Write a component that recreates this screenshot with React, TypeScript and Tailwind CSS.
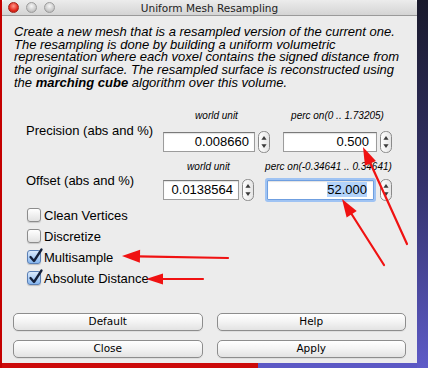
import React from "react";

type Pt = [number, number];

function Arrow({ from, tip, L = 18, W = 6 }: { from: Pt; tip: Pt; L?: number; W?: number }) {
  const dx = tip[0] - from[0];
  const dy = tip[1] - from[1];
  const len = Math.hypot(dx, dy);
  const ux = dx / len;
  const uy = dy / len;
  const bx = tip[0] - ux * L;
  const by = tip[1] - uy * L;
  const px = -uy;
  const py = ux;
  const pts = `${tip[0]},${tip[1]} ${bx + px * W},${by + py * W} ${bx - px * W},${by - py * W}`;
  return (
    <g>
      <line x1={from[0]} y1={from[1]} x2={bx + ux * 2} y2={by + uy * 2} stroke="#f01212" strokeWidth={2.2} strokeLinecap="round" />
      <polygon points={pts} fill="#f01212" />
    </g>
  );
}

function Stepper({ id }: { id: string }) {
  return (
    <svg width="12" height="22" viewBox="0 0 12 22" className="shrink-0 -my-[1px]">
      <defs>
        <linearGradient id={id} x1="0" y1="0" x2="1" y2="0">
          <stop offset="0" stopColor="#ffffff" />
          <stop offset="1" stopColor="#e4e4e4" />
        </linearGradient>
      </defs>
      <rect x="0.5" y="0.5" width="11" height="21" rx="5" fill={`url(#${id})`} stroke="#8a8a8a" />
      <polygon points="6,5 8.6,8.8 3.4,8.8" fill="#3a3a3a" />
      <polygon points="6,17 8.6,13.2 3.4,13.2" fill="#3a3a3a" />
    </svg>
  );
}

function Check({ checked, label }: { checked?: boolean; label: string }) {
  return (
    <div className="flex items-center h-[21px]">
      {checked ? (
        <span className="relative w-[14px] h-[14px] rounded-[3px] border border-[#5a7fb5] bg-gradient-to-b from-[#dbeafc] to-[#86b6ee] shadow-[0_1px_1px_rgba(0,0,0,0.2)]">
          <svg width="16" height="16" viewBox="0 0 16 16" className="absolute left-[0px] top-[-3px] overflow-visible">
            <path d="M2.5 9 L6 13 L13.5 1.5" fill="none" stroke="#14203a" strokeWidth="2.3" strokeLinecap="round" strokeLinejoin="round" />
          </svg>
        </span>
      ) : (
        <span className="w-[14px] h-[14px] rounded-[3px] border border-[#8c8c8c] bg-gradient-to-b from-[#ffffff] to-[#e2e2e2] shadow-[0_1px_1px_rgba(0,0,0,0.15)]" />
      )}
      <span className="ml-[3px] text-[13px] text-black leading-[15px]">{label}</span>
    </div>
  );
}

function Btn({ label }: { label: string }) {
  return (
    <div className="h-[18px] rounded-[5px] border border-[#8d8d8d] bg-gradient-to-b from-[#ffffff] via-[#f3f3f3] to-[#e3e3e3] flex items-center justify-center text-[10.5px] text-black font-['DejaVu_Sans',sans-serif] shadow-[0_1px_0_rgba(0,0,0,0.06)]">
      {label}
    </div>
  );
}

export default function App() {
  return (
    <div className="relative flex w-[428px] h-[368px] overflow-hidden font-['Liberation_Sans',Arial,sans-serif]">
      <div className="w-[2px] h-full bg-[#c40000]" />
      <div className="w-[415px] flex flex-col">
        <div className="h-[363px] flex flex-col bg-[#ececec] rounded-t-[4px]">
          {/* title bar */}
          <div className="h-[16px] shrink-0 grid grid-cols-[1fr_auto_1fr] items-center border-b border-[#9a9a9a] bg-gradient-to-b from-[#ececec] to-[#d4d4d4] rounded-t-[4px]">
            <div className="flex items-center gap-[7px] pl-[6px]">
              <span className="w-[11px] h-[11px] rounded-full border border-[#a3231b] bg-[radial-gradient(circle_at_50%_35%,#ff9a8e,#e3281c_60%,#a9160e)]" />
              <span className="w-[11px] h-[11px] rounded-full border border-[#9c9c9c] bg-[radial-gradient(circle_at_50%_35%,#f6f6f6,#cbcbcb_60%,#a9a9a9)]" />
              <span className="w-[11px] h-[11px] rounded-full border border-[#9c9c9c] bg-[radial-gradient(circle_at_50%_35%,#f6f6f6,#cbcbcb_60%,#a9a9a9)]" />
            </div>
            <div className="text-[10.5px] text-[#222] font-['DejaVu_Sans',sans-serif] leading-[14px]">Uniform Mesh Resampling</div>
            <div />
          </div>

          {/* description */}
          <div className="mt-[10px] pl-[12px] text-[13px] italic leading-[12.7px] text-black whitespace-nowrap">
            Create a new mesh that is a resampled version of the current one.
            <br />
            The resampling is done by building a uniform volumetric
            <br />
            representation where each voxel contains the signed distance from
            <br />
            the original surface. The resampled surface is reconstructed using
            <br />
            the <b>marching cube</b> algorithm over this volume.
          </div>

          {/* precision */}
          <div className="mt-[20px] flex items-center">
            <div className="w-[161px] pl-[24px] text-[13px] text-black leading-[15px]">Precision (abs and %)</div>
            <div className="w-[107px] flex flex-col">
              <div className="text-[10px] italic leading-[12px] text-center whitespace-nowrap">world unit</div>
              <div className="mt-[10px] h-[20px] flex items-center">
                <div className="w-[92px] h-[20px] bg-white border border-[#9c9c9c] border-t-[#7a7a7a] shadow-[inset_0_1px_1px_rgba(0,0,0,0.12)] flex items-center justify-end pr-[5px] text-[13px]">0.008660</div>
                <div className="ml-[3px] flex"><Stepper id="s1" /></div>
              </div>
            </div>
            <div className="ml-[13px] w-[109px] flex flex-col">
              <div className="text-[10px] italic leading-[12px] text-center whitespace-nowrap">perc on(0 .. 1.73205)</div>
              <div className="mt-[10px] h-[20px] flex items-center">
                <div className="w-[94px] h-[20px] bg-white border border-[#9c9c9c] border-t-[#7a7a7a] shadow-[inset_0_1px_1px_rgba(0,0,0,0.12)] flex items-center justify-end pr-[7px] text-[13px]">0.500</div>
                <div className="ml-[3px] flex"><Stepper id="s2" /></div>
              </div>
            </div>
          </div>

          {/* offset */}
          <div className="mt-[9px] flex items-center">
            <div className="w-[161px] pl-[24px] text-[13px] text-black leading-[15px]">Offset (abs and %)</div>
            <div className="w-[91px] flex flex-col">
              <div className="text-[10px] italic leading-[12px] text-center whitespace-nowrap">world unit</div>
              <div className="mt-[7px] h-[20px] flex items-center">
                <div className="w-[76px] h-[20px] bg-white border border-[#9c9c9c] border-t-[#7a7a7a] shadow-[inset_0_1px_1px_rgba(0,0,0,0.12)] flex items-center justify-end pr-[5px] text-[13px]">0.0138564</div>
                <div className="ml-[3px] flex"><Stepper id="s3" /></div>
              </div>
            </div>
            <div className="ml-[11px] w-[127px] flex flex-col">
              <div className="text-[10px] italic leading-[12px] text-center whitespace-nowrap">perc on(-0.34641 .. 0.34641)</div>
              <div className="mt-[7px] h-[20px] flex items-center">
                <div className="ml-[2px] w-[107px] h-[20px] bg-white border border-[#6f9fe0] shadow-[0_0_0_2px_#9fc3f3,inset_0_1px_1px_rgba(0,0,0,0.12)] rounded-[1px] flex items-center justify-end pr-[6px] text-[13px]">
                  <span className="bg-[#b3d3fb] leading-[15px]">52.000</span>
                </div>
                <div className="ml-[6px] flex"><Stepper id="s4" /></div>
              </div>
            </div>
          </div>

          {/* checkboxes */}
          <div className="mt-[5px] pl-[25px] flex flex-col">
            <Check label="Clean Vertices" />
            <Check label="Discretize" />
            <Check checked label="Multisample" />
            <Check checked label="Absolute Distance" />
          </div>

          {/* buttons */}
          <div className="mt-auto px-[11px] pb-[5px] grid grid-cols-2 gap-x-[14px] gap-y-[9px]">
            <Btn label="Default" />
            <Btn label="Help" />
            <Btn label="Close" />
            <Btn label="Apply" />
          </div>
        </div>
        <div className="flex-1 flex">
          <div className="w-[256px] bg-[#cc0a0a]" />
          <div className="flex-1 bg-[#5b58c4]" />
        </div>
      </div>
      <div className="flex-1 bg-gradient-to-b from-[#1a1a2c] via-[#34326c] to-[#5e5bc8]" />

      <svg className="absolute left-0 top-0 pointer-events-none" width="428" height="368" viewBox="0 0 428 368">
        <Arrow from={[407, 244]} tip={[363, 147]} />
        <Arrow from={[384, 265]} tip={[342, 199]} />
        <Arrow from={[228, 258]} tip={[122, 256]} W={6.5} />
        <Arrow from={[203, 279]} tip={[146, 279]} L={17} W={5.5} />
      </svg>
    </div>
  );
}
